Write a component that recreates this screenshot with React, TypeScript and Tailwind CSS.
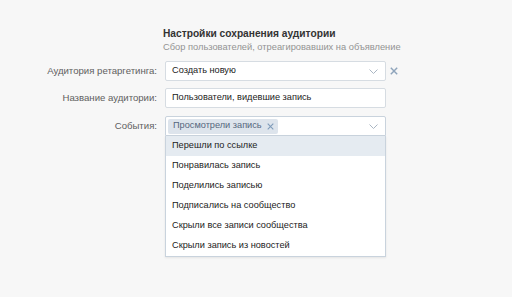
import { ReactNode } from 'react';

const font = { fontFamily: '"Liberation Sans", Arial, sans-serif' };

function Chevron() {
  return (
    <svg width="9" height="5" viewBox="0 0 9 5" className="shrink-0">
      <path d="M0.5 0.5 L4.5 4.5 L8.5 0.5" fill="none" stroke="#aab6c3" strokeWidth="1" />
    </svg>
  );
}

function Cross({ size, color, width }: { size: number; color: string; width: number }) {
  return (
    <svg width={size} height={size} viewBox="0 0 10 10" className="shrink-0">
      <path d="M1 1 L9 9 M9 1 L1 9" fill="none" stroke={color} strokeWidth={width} />
    </svg>
  );
}

function Label({ children }: { children: ReactNode }) {
  return (
    <div className="flex h-[20px] items-center justify-end text-[9.6px] text-[#606060]">{children}</div>
  );
}

const events = [
  'Перешли по ссылке',
  'Понравилась запись',
  'Поделились записью',
  'Подписались на сообщество',
  'Скрыли все записи сообщества',
  'Скрыли запись из новостей',
];

export default function App() {
  return (
    <div className="min-h-[297px] w-full bg-[#f7f7f7] pt-[27px]" style={font}>
      <div className="grid grid-cols-[157px_221px_20px] gap-x-[8px]">
        <div />
        <div className="-ml-[2px]">
          <div className="whitespace-nowrap text-[10.2px] font-bold leading-[13px] text-[#333]">
            Настройки сохранения аудитории
          </div>
          <div className="mt-[1px] whitespace-nowrap text-[9.3px] leading-[13px] text-[#939393]">
            Сбор пользователей, отреагировавших на объявление
          </div>
        </div>
        <div />

        <div className="mt-[7px]">
          <Label>Аудитория ретаргетинга:</Label>
        </div>
        <div className="mt-[7px] flex h-[20px] items-center justify-between rounded-[2px] border border-[#d6dce2] bg-white pl-[6px] pr-[7px] text-[9.2px] text-[#222]">
          <span>Создать новую</span>
          <Chevron />
        </div>
        <div className="-ml-[4px] mt-[7px] flex h-[20px] items-center">
          <Cross size={8} color="#8ea4bb" width={1.8} />
        </div>

        <div className="mt-[7px]">
          <Label>Название аудитории:</Label>
        </div>
        <div className="mt-[7px] flex h-[20px] items-center rounded-[2px] border border-[#d6dce2] bg-white pl-[6px] text-[9.2px] text-[#222]">
          Пользователи, видевшие запись
        </div>
        <div />

        <div className="mt-[8px]">
          <Label>События:</Label>
        </div>
        <div className="relative mt-[8px]">
          <div className="flex h-[20px] items-center justify-between rounded-t-[2px] border border-[#c9d3dd] bg-white pl-[2px] pr-[7px]">
            <div className="flex h-[15px] items-center gap-[5px] rounded-[2px] bg-[#dde4ec] pl-[5px] pr-[4px] text-[9.2px] text-[#55677d]">
              <span>Просмотрели запись</span>
              <Cross size={7} color="#7f9cba" width={1.6} />
            </div>
            <Chevron />
          </div>
          <div className="absolute left-0 right-0 top-[20px] border border-t-0 border-[#c9d3dd] bg-white shadow-[0_1px_2px_rgba(0,0,0,0.08)]">
            {events.map((e, i) => (
              <div
                key={e}
                className={
                  i === 0
                    ? 'flex h-[20px] items-center bg-[#e5ebf1] pl-[6px] text-[9.2px] text-[#222]'
                    : 'flex h-[20px] items-center pl-[6px] text-[9.2px] text-[#222]'
                }
              >
                {e}
              </div>
            ))}
          </div>
        </div>
        <div />
      </div>
    </div>
  );
}
